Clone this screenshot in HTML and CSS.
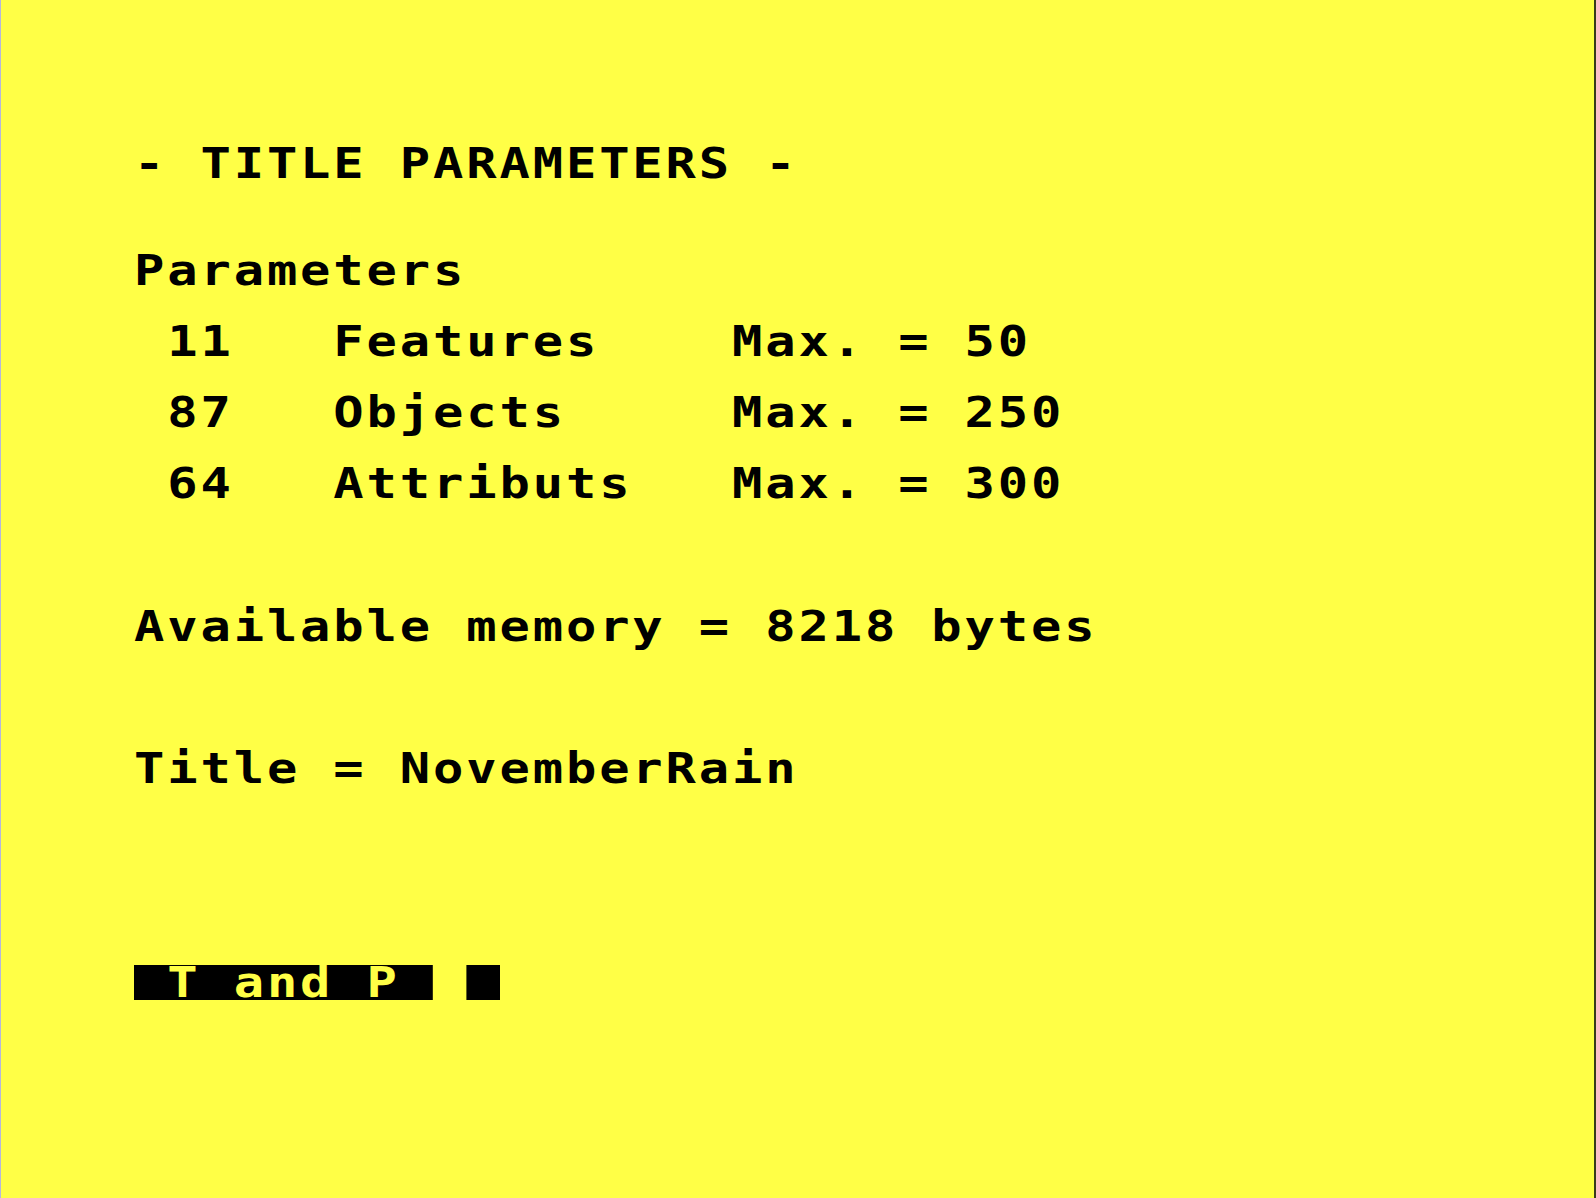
FILE: index.html
```
<!DOCTYPE html>
<html lang="en">
<head>
    <meta charset="UTF-8">
    <meta name="viewport" content="width=device-width, initial-scale=1.0">
    <title>Title Parameters</title>
    <link rel="stylesheet" href="styles.css">
</head>
<body>
    <div class="screen">
<pre class="text">- TITLE PARAMETERS -


Parameters

 11   Features    Max. = 50

 87   Objects     Max. = 250

 64   Attributs   Max. = 300



Available memory = 8218 bytes



Title = NovemberRain





<span class="inverse"> T and P </span> <span class="cursor"> </span></pre>
    </div>
</body>
</html>
```

FILE: styles.css
```
html, body {
    margin: 0;
    padding: 0;
    background-color: #ffff46;
}

.screen {
    box-sizing: border-box;
    min-height: 100vh;
    padding: 146px 0 0 133px;
    background-color: #ffff46;
    border-left: 1px solid #b6b6dc;
    border-right: 2px solid #3a3a1c;
    overflow: hidden;
}

/* 8x8 character cells, stretched wide like the old text mode */
.text {
    margin: 0;
    font-family: "DejaVu Sans Mono", "Liberation Mono", monospace;
    font-weight: bold;
    font-size: 42px;
    line-height: 35.6px;
    letter-spacing: 2.4px;
    color: #000;
    white-space: pre;
    transform: scaleX(1.2);
    transform-origin: left top;
}

.inverse,
.cursor {
    display: inline-block;
    height: 35px;
    line-height: 35.6px;
    vertical-align: top;
    background-color: #000;
    color: #ffff46;
}
```
